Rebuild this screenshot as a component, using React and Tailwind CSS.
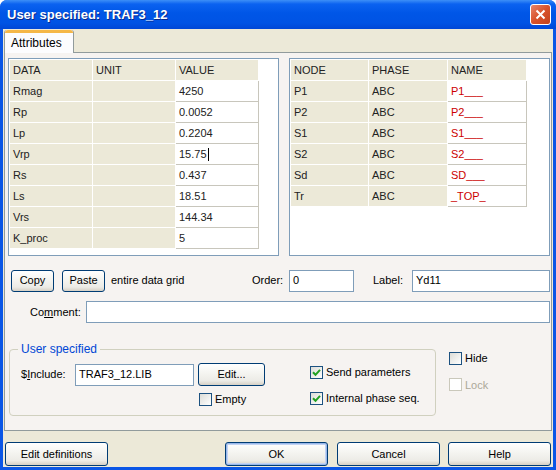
import React from 'react';

const dataRows = [
  ['Rmag', '4250'],
  ['Rp', '0.0052'],
  ['Lp', '0.2204'],
  ['Vrp', '15.75'],
  ['Rs', '0.437'],
  ['Ls', '18.51'],
  ['Vrs', '144.34'],
  ['K_proc', '5'],
];

const nodeRows = [
  ['P1', 'ABC', 'P1___'],
  ['P2', 'ABC', 'P2___'],
  ['S1', 'ABC', 'S1___'],
  ['S2', 'ABC', 'S2___'],
  ['Sd', 'ABC', 'SD___'],
  ['Tr', 'ABC', '_TOP_'],
];

function Button({ children, className = '' }) {
  return (
    <div
      className={`flex items-center justify-center rounded-[3px] border border-[#003c74] bg-[linear-gradient(180deg,#ffffff_0%,#f4f4f0_45%,#ecebe6_80%,#d6d0c5_100%)] text-[11px] text-black ${className}`}
    >
      {children}
    </div>
  );
}

function Checkbox({ checked, disabled }) {
  return (
    <div
      className={`flex h-[13px] w-[13px] items-center justify-center border ${
        disabled
          ? 'border-[#cac8bb] bg-white'
          : 'border-[#1c5180] bg-[linear-gradient(135deg,#dcdcd7_0%,#ffffff_100%)]'
      }`}
    >
      {checked && (
        <svg width="9" height="9" viewBox="0 0 9 9">
          <path d="M1 4.2 L3.5 6.8 L8 1.8" stroke="#21a121" strokeWidth="2" fill="none" />
        </svg>
      )}
    </div>
  );
}

function Input({ value, className = '' }) {
  return (
    <div className={`flex h-[22px] items-center border border-[#7f9db9] bg-white pl-[3px] text-[11px] text-black ${className}`}>
      {value}
    </div>
  );
}

export default function App() {
  const beige = 'bg-[#ece9d8] border-white';
  const white = 'bg-white border-[#c8c6bc]';

  return (
    <div className="h-[470px] w-[556px] overflow-hidden rounded-t-[7px] bg-[#0a56e6] font-['Liberation_Sans',Arial,sans-serif]">
      {/* title bar */}
      <div className="flex h-[29px] items-center justify-between bg-[linear-gradient(180deg,#3d8ff7_0%,#0b62f0_14%,#0056e7_45%,#0053e4_80%,#0047d6_100%)] pl-[7px] pr-[5px]">
        <span className="text-[13px] font-bold text-white [text-shadow:1px_1px_0_#0a2a8a]">
          User specified: TRAF3_12
        </span>
        <div className="flex h-[21px] w-[21px] items-center justify-center rounded-[3px] border border-white bg-[linear-gradient(135deg,#e8856a_0%,#d8522b_50%,#c2411c_100%)]">
          <svg width="11" height="11" viewBox="0 0 11 11">
            <path d="M1.5 1.5 L9.5 9.5 M9.5 1.5 L1.5 9.5" stroke="white" strokeWidth="2" />
          </svg>
        </div>
      </div>

      {/* client area */}
      <div className="mx-[3px] h-[438px] bg-[#ece9d8] pt-[1px]">
        {/* tab strip */}
        <div className="relative z-10 ml-[1px] flex h-[23px]">
          <div className="flex h-[23px] w-[70px] flex-col rounded-t-[3px] border-x border-[#919b9c] bg-[#fcfcfe]">
            <div className="h-[3px] rounded-t-[3px] bg-[#f5b747]" />
            <div className="flex flex-1 items-center pl-[6px] text-[12px] text-black">Attributes</div>
          </div>
        </div>

        {/* tab panel */}
        <div className="-mt-px mx-[1px] h-[379px] border border-[#919b9c] bg-[#f6f3f1]">
          {/* grids */}
          <div className="mt-[5px] ml-[3px] flex gap-[10px]">
            <div className="h-[198px] w-[271px] border border-[#7f9db9] bg-white p-px">
              <div className="grid grid-cols-[83px_83px_83px] text-[11px] text-[#222]">
                <div className={`flex h-[21px] items-center border-r border-b pl-[3px] ${beige}`}>DATA</div>
                <div className={`flex h-[21px] items-center border-r border-b pl-[3px] ${beige}`}>UNIT</div>
                <div className={`flex h-[21px] items-center border-r border-b pl-[3px] ${beige}`}>VALUE</div>
                {dataRows.map(([name, val]) => (
                  <React.Fragment key={name}>
                    <div className={`flex h-[21px] items-center border-r border-b pl-[3px] ${beige}`}>{name}</div>
                    <div className={`flex h-[21px] items-center border-r border-b pl-[3px] ${beige}`} />
                    <div className={`flex h-[21px] items-center border-r border-b pl-[3px] ${white}`}>
                      {val}
                      {name === 'Vrp' && <span className="ml-px inline-block h-[13px] w-px bg-black" />}
                    </div>
                  </React.Fragment>
                ))}
              </div>
            </div>

            <div className="h-[198px] w-[261px] border border-[#7f9db9] bg-white p-px">
              <div className="grid grid-cols-[78px_79px_79px] text-[11px] text-[#222]">
                <div className={`flex h-[21px] items-center border-r border-b pl-[3px] ${beige}`}>NODE</div>
                <div className={`flex h-[21px] items-center border-r border-b pl-[3px] ${beige}`}>PHASE</div>
                <div className={`flex h-[21px] items-center border-r border-b pl-[3px] ${beige}`}>NAME</div>
                {nodeRows.map(([node, phase, name]) => (
                  <React.Fragment key={node}>
                    <div className={`flex h-[21px] items-center border-r border-b pl-[3px] ${beige}`}>{node}</div>
                    <div className={`flex h-[21px] items-center border-r border-b pl-[3px] ${beige}`}>{phase}</div>
                    <div className={`flex h-[21px] items-center border-r border-b pl-[3px] text-[#cc0000] ${white}`}>
                      {name}
                    </div>
                  </React.Fragment>
                ))}
              </div>
            </div>
          </div>

          {/* copy / paste row */}
          <div className="mt-[13px] flex h-[23px] items-center pl-[6px] text-[11px] text-black">
            <Button className="h-[22px] w-[43px]">Copy</Button>
            <Button className="ml-[8px] h-[22px] w-[43px]">Paste</Button>
            <span className="ml-[6px]">entire data grid</span>
            <div className="ml-auto flex items-center pr-[1px]">
              <span className="w-[37px]">Order:</span>
              <Input value="0" className="w-[65px]" />
              <span className="ml-[19px] w-[39px]">Label:</span>
              <Input value="Yd11" className="w-[138px]" />
            </div>
          </div>

          {/* comment */}
          <div className="mt-[9px] flex items-center pl-[25px] pr-[1px] text-[11px] text-black">
            <span className="w-[56px]">
              Co<span className="underline">m</span>ment:
            </span>
            <Input value="" className="flex-1" />
          </div>

          {/* user specified + hide/lock */}
          <div className="mt-[20px] flex text-[11px] text-black">
            <div className="relative ml-[4px] mt-[6px] h-[67px] w-[427px] rounded-[4px] border border-[#d0d0bf]">
              <span className="absolute -top-[7px] left-[8px] bg-[#f6f3f1] px-[3px] text-[12px] leading-[13px] text-[#0046d5]">
                User specified
              </span>
              <div className="mt-[13px] flex h-[23px] items-center pl-[11px]">
                <span className="w-[54px]">
                  $<span className="underline">I</span>nclude:
                </span>
                <Input value="TRAF3_12.LIB" className="w-[119px]" />
                <Button className="ml-[4px] h-[23px] w-[67px]">Edit...</Button>
                <div className="ml-[45px] -mt-[5px] flex items-center gap-[3px]">
                  <Checkbox checked />
                  <span>Send parameters</span>
                </div>
              </div>
              <div className="mt-[5px] flex h-[14px] items-center">
                <div className="ml-[189px] mt-[3px] flex w-[111px] items-center gap-[3px]">
                  <Checkbox />
                  <span>Empty</span>
                </div>
                <div className="flex items-center gap-[3px]">
                  <Checkbox checked />
                  <span>Internal phase seq.</span>
                </div>
              </div>
            </div>

            <div className="ml-[13px] flex flex-col">
              <div className="mt-[7px] flex items-center gap-[3px]">
                <Checkbox />
                <span>Hide</span>
              </div>
              <div className="mt-[10px] flex items-center gap-[3px] text-[#aca899]">
                <Checkbox disabled />
                <span>Lock</span>
              </div>
            </div>
          </div>
        </div>

        {/* bottom buttons */}
        <div className="mt-[11px] flex pl-[2px]">
          <Button className="h-[24px] w-[103px]">Edit definitions</Button>
          <Button className="ml-[117px] h-[24px] w-[103px] shadow-[inset_0_0_0_1px_#98b8ea,inset_0_0_0_2px_#c2d3f3]">OK</Button>
          <Button className="ml-[9px] h-[24px] w-[103px]">Cancel</Button>
          <Button className="ml-[8px] h-[24px] w-[103px]">Help</Button>
        </div>
      </div>
    </div>
  );
}
